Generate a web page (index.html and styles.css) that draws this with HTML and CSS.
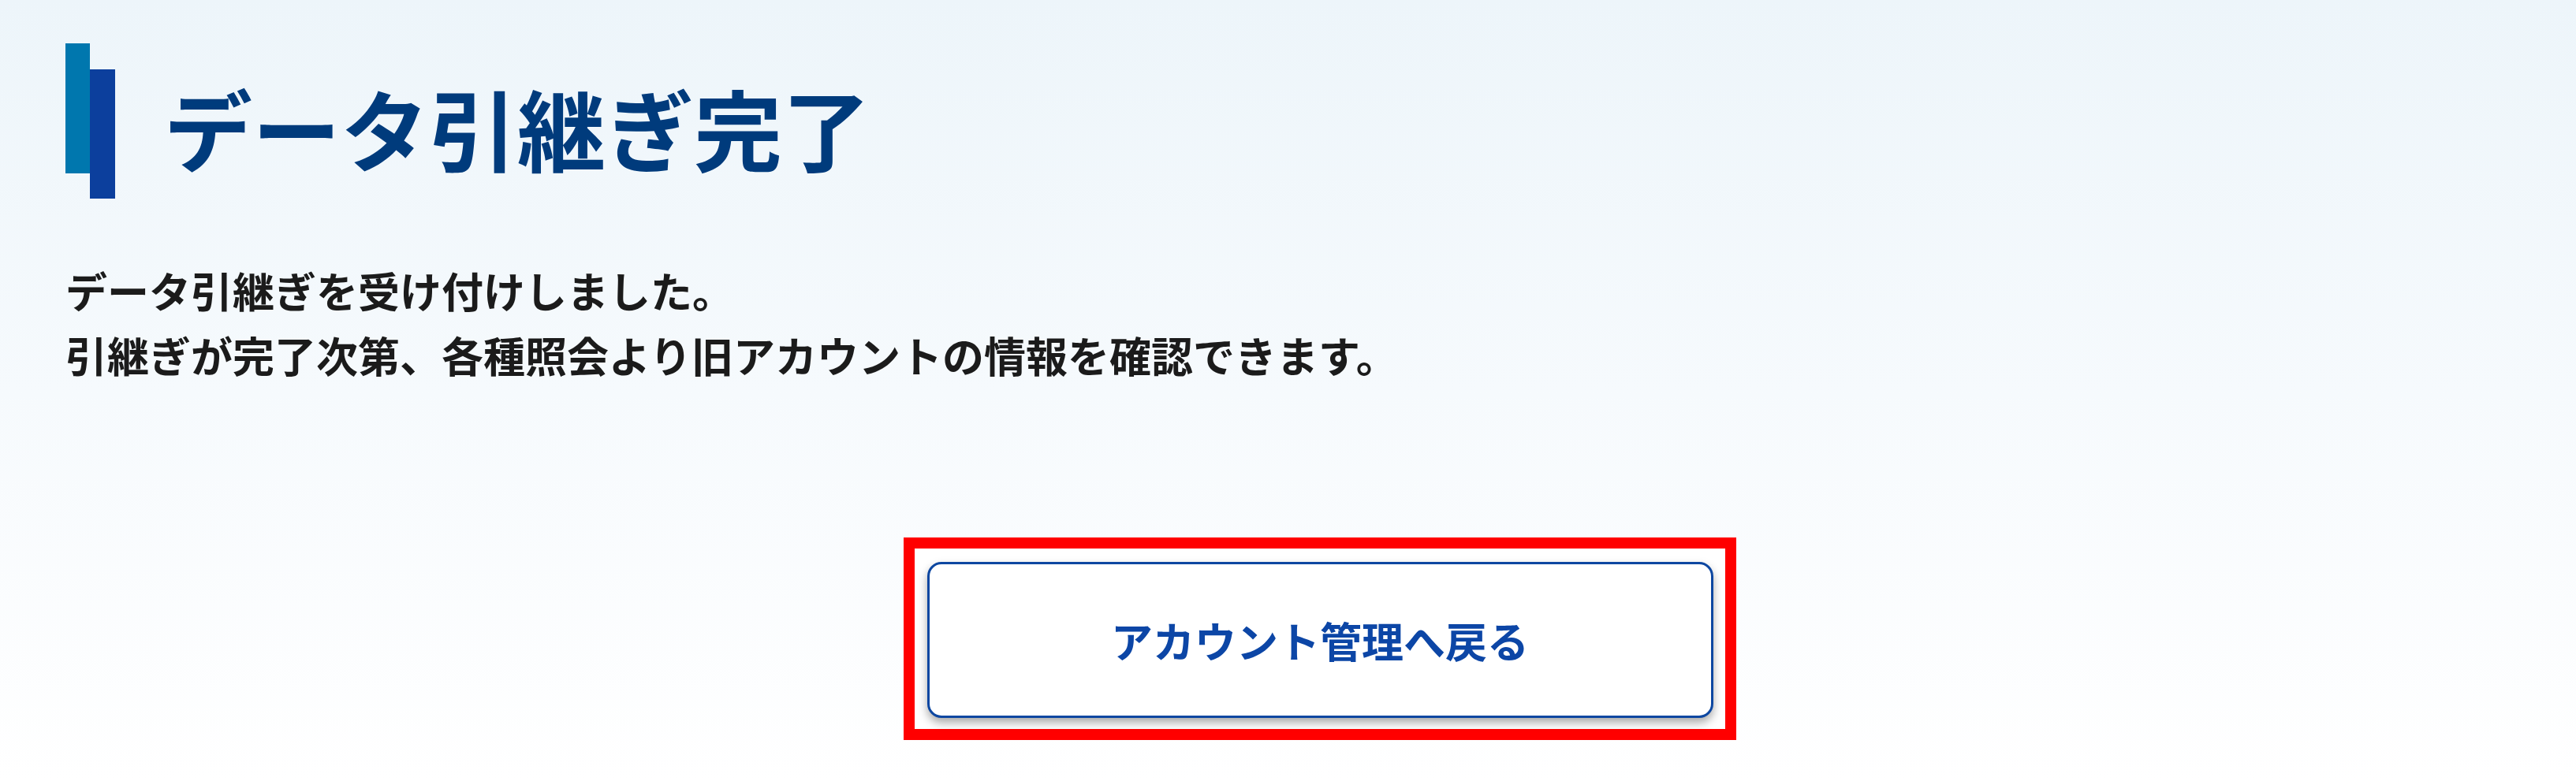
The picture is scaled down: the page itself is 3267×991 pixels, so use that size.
FILE: index.html
```html
<!DOCTYPE html>
<html lang="ja">
<head>
<meta charset="utf-8">
<title>データ引継ぎ完了</title>
<link rel="stylesheet" href="styles.css">
</head>
<body>
<main class="page">
  <header class="heading">
    <div class="bars">
      <span class="bar bar-light"></span>
      <span class="bar bar-dark"></span>
    </div>
    <h1 class="title">データ引継ぎ完了</h1>
  </header>
  <div class="message">
    <p>データ引継ぎを受け付けしました。</p>
    <p>引継ぎが完了次第、各種照会より旧アカウントの情報を確認できます。</p>
  </div>
  <div class="actions">
    <div class="highlight">
      <button class="back-button" type="button">アカウント管理へ戻る</button>
    </div>
  </div>
</main>
</body>
</html>
```

FILE: styles.css
```css
html, body {
  margin: 0;
  padding: 0;
}

body {
  width: 3267px;
  height: 991px;
  overflow: hidden;
  background: linear-gradient(180deg, #edf5fa 0%, #f6fafd 50%, #ffffff 100%);
  font-family: "Noto Sans CJK JP", "Noto Sans", sans-serif;
  color: #1b1b1b;
}

.page {
  padding: 55px 3px 0 83px;
}

.heading {
  display: flex;
  align-items: center;
  height: 197px;
}

.bars {
  display: flex;
  align-items: flex-start;
  height: 197px;
  flex: none;
}

.bar {
  display: block;
  width: 31px;
  height: 165px;
}

.bar-light {
  background: #0077ae;
}

.bar-dark {
  width: 32px;
  height: 164px;
  margin-top: 33px;
  background: #0c3f9d;
}

.title {
  margin: 0 0 0 62px;
  padding-top: 14px;
  font-size: 112px;
  font-weight: 700;
  line-height: 1;
  color: #003b7c;
  white-space: nowrap;
}

.message {
  margin-top: 75px;
}

.message p {
  margin: 0;
  font-size: 53px;
  font-weight: 700;
  line-height: 82px;
  white-space: nowrap;
}

.actions {
  display: flex;
  justify-content: center;
  margin-top: 191px;
}

.highlight {
  border: 14px solid #ff0000;
  background: #ffffff;
  padding: 17px 15px 14px 16px;
}

.back-button {
  display: flex;
  align-items: center;
  justify-content: center;
  width: 997px;
  height: 198px;
  box-sizing: border-box;
  border: 3px solid #0d47a1;
  border-radius: 18px;
  background: #ffffff;
  box-shadow: 0 6px 12px rgba(0, 0, 0, 0.34);
  font-family: "Noto Sans CJK JP", "Noto Sans", sans-serif;
  font-size: 53px;
  font-weight: 700;
  color: #0c46a6;
  padding: 0;
  cursor: pointer;
}
```
